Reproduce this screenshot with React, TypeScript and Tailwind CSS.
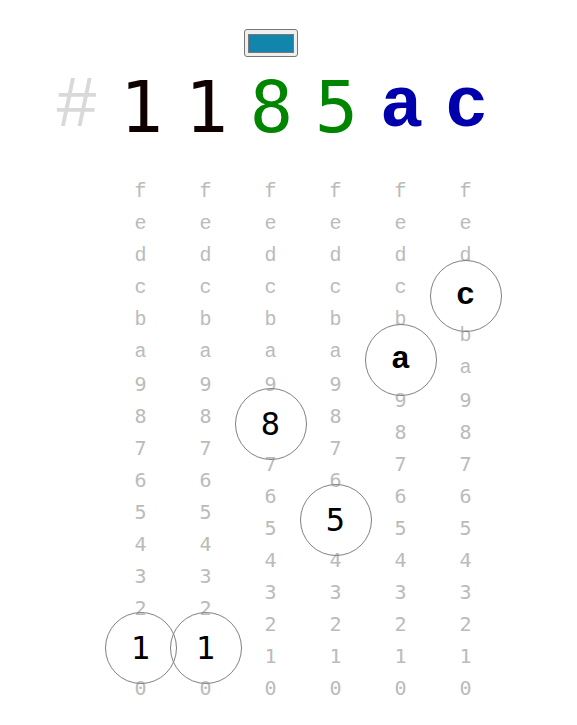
const HEX = '1185ac';
const DIGITS = 'fedcba9876543210'.split('');

// colour of each hex char follows its channel
const CHANNEL_COLORS = ['text-[#110000]', 'text-[#110000]', 'text-[#008500]', 'text-[#008500]', 'text-[#0000ac]', 'text-[#0000ac]'];

const isDigit = (ch: string) => /[0-9]/.test(ch);

function DigitColumn({ value }: { value: string }) {
  return (
    <div className="flex w-[65px] flex-col items-center">
      {DIGITS.map((d) =>
        d === value ? (
          <div key={d} className="relative flex h-[48px] w-full items-center justify-center">
            <div
              className={`absolute left-1/2 top-1/2 flex h-[72px] w-[72px] -translate-x-1/2 -translate-y-1/2 items-center justify-center rounded-full border border-[#808080] text-[32px] leading-none text-black ${
                isDigit(d) ? 'font-["DejaVu_Sans_Mono",monospace]' : 'font-mono font-bold'
              }`}
            >
              {d}
            </div>
          </div>
        ) : (
          <div
            key={d}
            className={`flex h-[32px] items-center justify-center text-[20px] leading-none text-[#bbbbbb] ${
              isDigit(d) ? 'font-["DejaVu_Sans_Mono",monospace]' : 'font-mono'
            }`}
          >
            {d}
          </div>
        )
      )}
    </div>
  );
}

export default function App() {
  const chars = HEX.split('');

  return (
    <div className="min-h-[725px] w-[577px] bg-white">
      {/* swatch */}
      <div className="flex pl-[244px] pt-[29px]">
        <div className="flex h-[28px] w-[54px] items-center justify-center rounded-[3px] border border-[#767676] bg-[#efefef]">
          <div className="h-[19px] w-[46px] border border-[#777777] bg-[#1185ac]" />
        </div>
      </div>

      {/* big hex */}
      <div className="mt-[10px] flex h-[80px] items-center pl-[44px]">
        <div className="flex w-[65px] justify-center font-mono text-[72px] leading-none text-[#d9d9d9]">#</div>
        {chars.map((c, i) => (
          <div
            key={i}
            className={`flex w-[65px] justify-center text-[72px] leading-none ${CHANNEL_COLORS[i]} ${
              isDigit(c) ? 'font-["DejaVu_Sans_Mono",monospace]' : 'font-mono font-bold'
            }`}
          >
            {c}
          </div>
        ))}
      </div>

      {/* digit columns */}
      <div className="mt-[29px] flex pl-[108px]">
        {chars.map((c, i) => (
          <DigitColumn key={i} value={c} />
        ))}
      </div>
    </div>
  );
}
